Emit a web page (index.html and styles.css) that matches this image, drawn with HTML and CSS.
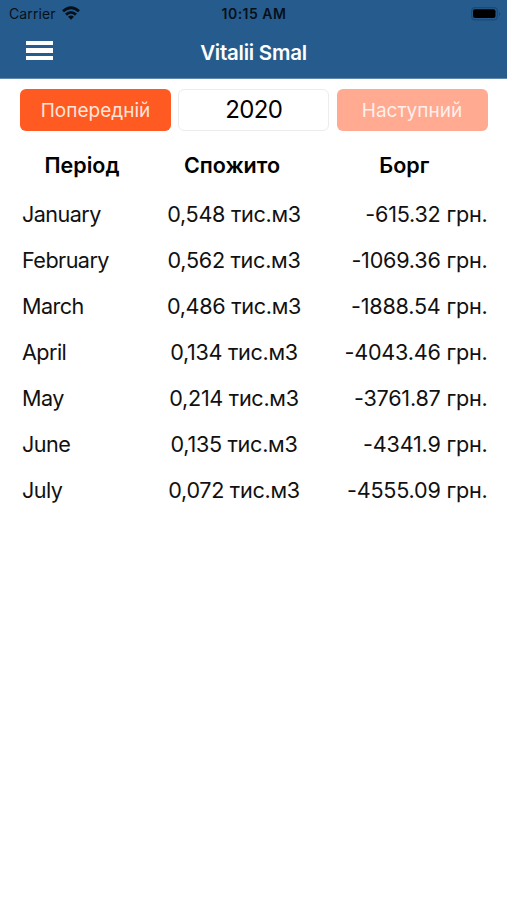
FILE: index.html
```html
<!DOCTYPE html>
<html lang="uk">
<head>
<meta charset="utf-8">
<title>Vitalii Smal</title>
<link rel="stylesheet" href="styles.css">
</head>
<body>
<header class="top">
  <div class="status">
    <div class="carrier"><span>Carrier</span>
      <svg class="wifi" width="18" height="14" viewBox="0 0 18 14" fill="none" stroke="#06101a" stroke-width="2.8"><path d="M1 5.2Q9-1.8 17 5.2M4 8.6Q9 4.2 14 8.6"/><path d="M6 10.8Q9 8.4 12 10.8L9 13.8Z" fill="#06101a" stroke="none"/></svg>
    </div>
    <span class="clock">10:15 AM</span>
    <svg class="battery" width="31" height="14" viewBox="0 0 31 14"><rect x=".7" y=".7" width="25.6" height="12.2" rx="3.5" fill="none" stroke="#1b4a72" stroke-width="1.2"/><rect x="2" y="2.2" width="22.5" height="8.8" rx="2" fill="#000"/><path d="M28 5v4q2-2 0-4" fill="#1b4265"/></svg>
  </div>
  <nav class="bar">
    <button class="menu" aria-label="Menu"><i></i><i></i><i></i></button>
    <h1>Vitalii Smal</h1>
  </nav>
</header>
<main>
  <div class="years">
    <button class="btn prev"><span>Попередній</span></button>
    <div class="year">2020</div>
    <button class="btn next" disabled><span>Наступний</span></button>
  </div>
  <div class="row head"><b>Період</b><b class="used">Спожито</b><b class="debt">Борг</b></div>
  <div class="row"><span class="month">January</span><span class="used">0,548 тис.м3</span><span class="debt">-615.32 грн.</span></div>
  <div class="row"><span class="month">February</span><span class="used">0,562 тис.м3</span><span class="debt">-1069.36 грн.</span></div>
  <div class="row"><span class="month">March</span><span class="used">0,486 тис.м3</span><span class="debt">-1888.54 грн.</span></div>
  <div class="row"><span class="month">April</span><span class="used">0,134 тис.м3</span><span class="debt">-4043.46 грн.</span></div>
  <div class="row"><span class="month">May</span><span class="used">0,214 тис.м3</span><span class="debt">-3761.87 грн.</span></div>
  <div class="row"><span class="month">June</span><span class="used">0,135 тис.м3</span><span class="debt">-4341.9 грн.</span></div>
  <div class="row"><span class="month">July</span><span class="used">0,072 тис.м3</span><span class="debt">-4555.09 грн.</span></div>
</main>
</body>
</html>
```
FILE: styles.css
```css
* { box-sizing: border-box; }
body { margin: 0; background: #fff; color: #111; font-family: Inter, "Liberation Sans", sans-serif; }
button { border: 0; padding: 0; font: inherit; }
.top { height: 79px; background: #265c8d; border-bottom: 1px solid #5f89ae; }
.status { display: grid; grid-template-columns: 1fr auto 1fr; align-items: center; height: 27px; padding: 0 5px 0 9px; color: #06101a; font-size: 14px; }
.carrier { display: flex; align-items: center; gap: 6px; letter-spacing: .1px; }
.wifi { margin-top: -2px; }
.clock { font-weight: 600; font-size: 14px; letter-spacing: .5px; margin-left: -3px; }
.battery { justify-self: end; }
.bar { display: grid; grid-template-columns: 72px 1fr 72px; align-items: center; height: 50px; }
.menu { display: flex; flex-direction: column; gap: 3px; width: 27px; margin: -3px 0 0 26px; background: none; }
.menu i { height: 4.5px; background: #fff; }
h1 { margin: 1px 0 0; text-align: center; color: #fff; font-size: 20.5px; font-weight: 600; letter-spacing: -.25px; }
main { padding: 10px 19.5px 0 20px; }
.years { display: grid; grid-template-columns: repeat(3, 151px); justify-content: space-between; height: 42px; }
.btn { border-radius: 6px; background: #ff5a22; color: #ffe5dc; font-size: 19px; }
.next { background: #ffaa91; color: #fff0eb; }
.year { display: flex; align-items: center; justify-content: center; border: 1px solid #ececec; border-radius: 6px; color: #000; font-size: 24px; letter-spacing: -.6px; padding-bottom: 1px; }
.row { display: grid; grid-template-columns: 120px 184px 161.5px; align-items: center; height: 46px; padding-left: 2px; font-size: 21.6px; letter-spacing: -.3px; white-space: nowrap; }
.month { letter-spacing: -.55px; }
.used { text-align: center; }
.debt { text-align: right; letter-spacing: -.22px; }
.head { height: 50px; margin-top: 9px; margin-bottom: 1px; color: #000; font-size: 21.5px; letter-spacing: 0; }
.head b { font-weight: 600; text-align: center; }
.head .used { margin-left: -4px; }
.head .debt { margin-left: -5px; letter-spacing: 0; }
```
